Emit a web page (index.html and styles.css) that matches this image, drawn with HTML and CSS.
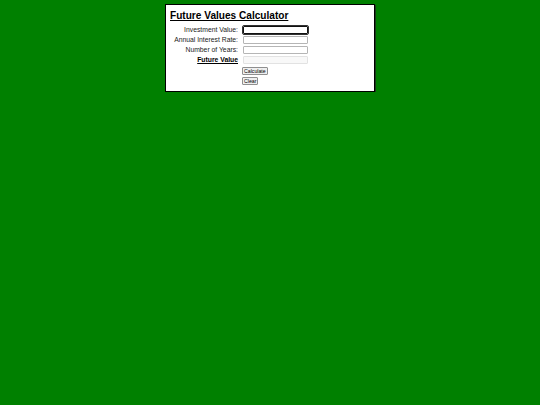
FILE: index.html
```html
<!DOCTYPE html>
<html>
<head>
<meta charset="utf-8">
<title>Future Values Calculator</title>
<link rel="stylesheet" href="styles.css">
</head>
<body>
<div class="card">
  <h1 class="title">Future Values Calculator</h1>
  <form class="form">
    <label class="lbl" for="inv">Investment Value:</label>
    <input class="field field-focus" id="inv" type="text">
    <label class="lbl" for="rate">Annual Interest Rate:</label>
    <input class="field" id="rate" type="text">
    <label class="lbl" for="years">Number of Years:</label>
    <input class="field" id="years" type="text">
    <label class="lbl lbl-strong" for="fv">Future Value</label>
    <input class="field field-off" id="fv" type="text" disabled>
    <span></span>
    <div class="btns">
      <button type="button" class="btn">Calculate</button>
      <button type="button" class="btn">Clear</button>
    </div>
  </form>
</div>
</body>
</html>
```
FILE: styles.css
```css
html, body {
  margin: 0;
  padding: 0;
  background: #008000;
  font-family: "Liberation Sans", Arial, sans-serif;
}
.card {
  width: 208px;
  height: 86px;
  margin: 4px auto 0;
  background: #fff;
  border: 1px solid #000;
  box-shadow: 1px 1px 0 #1a3a1a;
  padding: 0;
}
.title {
  margin: 4px 0 0 4px;
  font-size: 10.1px;
  line-height: 13px;
  font-weight: bold;
  text-decoration: underline;
  color: #000;
}
.form {
  display: grid;
  grid-template-columns: 72px 65px;
  column-gap: 4px;
  grid-auto-rows: 10px;
  margin-top: 4px;
}
.lbl {
  text-align: right;
  font-size: 6.8px;
  line-height: 8px;
  color: #222;
  white-space: nowrap;
}
.lbl-strong {
  font-weight: bold;
  text-decoration: underline;
  color: #000;
}
.field {
  box-sizing: border-box;
  width: 65px;
  height: 8px;
  margin: 0 0 0 1px;
  padding: 0;
  border: 1px solid #b5b5b5;
  border-radius: 1px;
  background: #fff;
  font-size: 6px;
}
.field-focus {
  border: 1px solid #111;
  outline: 0.5px solid #333;
}
.field-off {
  background: #f8f8f8;
  border-color: #e2e2e2;
}
.btns {
  display: flex;
  flex-direction: column;
  align-items: flex-start;
  gap: 2px;
  padding-top: 1px;
}
.btn {
  font-family: "Liberation Sans", Arial, sans-serif;
  font-size: 5.2px;
  line-height: 6px;
  padding: 0 1px;
  margin: 0;
  height: 8px;
  background: #efefef;
  border: 1px solid #8f8f8f;
  border-radius: 1px;
  color: #000;
}
```
